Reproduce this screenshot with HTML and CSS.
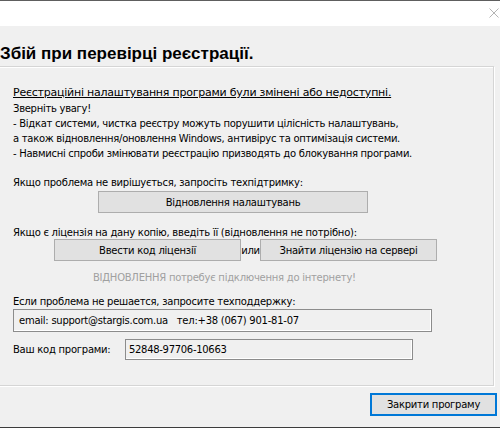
FILE: index.html
```html
<!DOCTYPE html>
<html lang="uk">
<head>
<meta charset="utf-8">
<title>Збій при перевірці реєстрації</title>
<link rel="stylesheet" href="styles.css">
</head>
<body>
<div class="win">
  <div class="topline"></div>
  <div class="titlebar">
    <svg class="close-x" width="10" height="10" viewBox="0 0 10 10"><path d="M0.5 0.5 L9.5 9.5 M9.5 0.5 L0.5 9.5" stroke="#b4b4b4" stroke-width="1" fill="none"/></svg>
  </div>
  <div class="client">
    <h1 class="heading">Збій при перевірці реєстрації.</h1>
    <div class="group">
      <p class="lead">Реєстраційні налаштування програми були змінені або недоступні.</p>
      <p class="line">Зверніть увагу!</p>
      <p class="line">- Відкат системи, чистка реєстру можуть порушити цілісність налаштувань,</p>
      <p class="line">а також відновлення/оновлення Windows, антивірус та оптимізація системи.</p>
      <p class="line">- Навмисні спроби змінювати реєстрацію призводять до блокування програми.</p>
      <p class="q q1">Якщо проблема не вирішується, запросіть техпідтримку:</p>
      <div class="row row-restore"><button class="btn btn-restore">Відновлення налаштувань</button></div>
      <p class="q q2">Якщо є ліцензія на дану копію, введіть її (відновлення не потрібно):</p>
      <div class="row row-lic">
        <button class="btn btn-code">Ввести код ліцензії</button>
        <span class="or">или</span>
        <button class="btn btn-find">Знайти ліцензію на сервері</button>
      </div>
      <p class="q note">ВІДНОВЛЕННЯ потребує підключення до інтернету!</p>
      <p class="q q3">Если проблема не решается, запросите техподдержку:</p>
      <div class="field field-contact">email: support@stargis.com.ua&nbsp;&nbsp; тел:+38 (067) 901-81-07</div>
      <div class="row row-code">
        <span class="code-label">Ваш код програми:</span>
        <div class="field field-code">52848-97706-10663</div>
      </div>
    </div>
    <div class="footer"><button class="btn btn-close">Закрити програму</button></div>
  </div>
  <div class="bottomline"></div>
</div>
</body>
</html>
```
FILE: styles.css
```css
html, body {
  margin: 0;
  padding: 0;
  background: #f0f0f0;
}
body {
  width: 500px;
  height: 428px;
  overflow: hidden;
  font-family: "DejaVu Sans", sans-serif;
  font-size: 10px;
  letter-spacing: -0.25px;
  color: #000;
}
.win {
  width: 500px;
  height: 428px;
  display: flex;
  flex-direction: column;
}
.topline {
  height: 1px;
  background: #5e5e5e;
}
.titlebar {
  height: 25px;
  background: #fff;
  display: flex;
  justify-content: flex-end;
  align-items: flex-start;
}
.close-x {
  margin-top: 7px;
  margin-right: 1px;
}
.client {
  height: 401px;
  display: flex;
  flex-direction: column;
}
.heading {
  margin: 18px 0 2px 0;
  height: 20px;
  line-height: 20px;
  font-family: "Liberation Sans", sans-serif;
  font-weight: bold;
  font-size: 17px;
  letter-spacing: 0;
}
.group {
  margin-left: -3px;
  width: 497px;
  box-sizing: border-box;
  height: 320px;
  border: 1px solid #d5d5d5;
  box-shadow: inset 1px 1px 0 #fff, 1px 1px 0 #fff;
  padding: 17px 0 0 15px;
}
p {
  margin: 0;
  line-height: 15px;
  white-space: nowrap;
}
.lead {
  font-size: 11px;
  letter-spacing: -0.23px;
  line-height: 17px;
  text-decoration: underline;
}
.line {
  letter-spacing: -0.28px;
}
.q {
  line-height: 12px;
}
.q1 { margin-top: 16px; }
.q2 { margin-top: 14px; }
.q3 { margin-top: 12px; }
.row {
  display: flex;
  align-items: center;
}
.row-restore { margin-top: 2px; }
.row-lic { margin-top: 0; }
.btn {
  font-family: "DejaVu Sans", sans-serif;
  font-size: 10px;
  letter-spacing: -0.25px;
  color: #000;
  background: #e1e1e1;
  border: 1px solid #adadad;
  padding: 0;
  margin: 0;
  height: 22px;
  box-sizing: border-box;
}
.btn-restore {
  margin-left: 85px;
  width: 270px;
}
.btn-code {
  margin-left: 41px;
  width: 187px;
}
.or {
  width: 19px;
  text-align: center;
}
.btn-find {
  width: 177px;
}
.note {
  margin-top: 11px;
  margin-left: 80px;
  color: #a0a0a0;
}
.field {
  box-sizing: border-box;
  border: 1px solid #8c8c8c;
  box-shadow: inset -1px -1px 0 #fff;
  display: flex;
  align-items: center;
  white-space: nowrap;
}
.field-contact {
  margin-top: 1px;
  width: 419px;
  height: 23px;
  padding-left: 5px;
}
.row-code {
  margin-top: 7px;
}
.code-label {
  width: 112px;
}
.field-code {
  width: 288px;
  height: 21px;
  padding-left: 3px;
  letter-spacing: -0.3px;
}
.footer {
  display: flex;
  justify-content: flex-end;
}
.btn-close {
  margin-top: 7px;
  margin-right: 3px;
  width: 127px;
  height: 23px;
  border: 2px solid #0078d7;
}
.bottomline {
  height: 1px;
  background: #3c3c3c;
}
```
